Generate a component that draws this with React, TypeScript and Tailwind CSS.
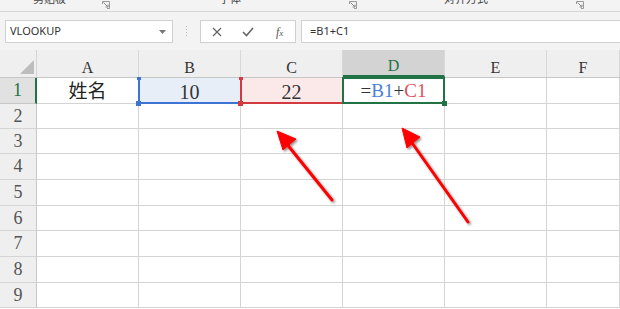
import React from "react";

const COLS = ["A", "B", "C", "D", "E", "F"];
const ROW_HEIGHTS = [26, 25, 25, 26, 26, 25, 26, 26, 25];

const Launcher = () => (
  <svg width="8" height="8" viewBox="0 0 8 8" className="block">
    <path d="M0.5 3V0.5H7.5V7.5H5" stroke="#9a9a9a" fill="none" strokeWidth="1" />
    <path d="M1.5 1.5L6 6M6 3.5V6H3.5" stroke="#8a8a8a" fill="none" strokeWidth="1" />
  </svg>
);

const Cell = ({ col, row }: { col: number; row: number }) => {
  const width = col === 5 ? "w-[73px]" : "w-[102px]";
  if (row === 0 && col === 0) {
    return (
      <div className={`${width} flex items-center justify-center border-r border-b border-[#d4d4d4] text-[19px] text-[#222] font-['Noto_Sans_CJK_SC',sans-serif]`}>
        姓名
      </div>
    );
  }
  if (row === 0 && col === 1) {
    return (
      <div className={`${width} relative flex items-center justify-center pt-[2px] bg-[#e8eef8] border-r border-b border-[#d4d4d4] text-[20px] text-[#333] font-['Liberation_Serif',serif]`}>
        <span className="absolute left-[-1px] top-0 bottom-[-1px] w-[2px] bg-[#3d73d2]" />
        <span className="absolute left-0 right-0 bottom-[-1px] h-[2px] bg-[#3d73d2]" />
        <span className="absolute left-[-2px] top-[-1px] w-[4px] h-[3px] bg-[#3d73d2]" />
        <span className="absolute left-[-3px] bottom-[-3px] w-[5px] h-[5px] bg-[#3d73d2]" />
        10
      </div>
    );
  }
  if (row === 0 && col === 2) {
    return (
      <div className={`${width} relative flex items-center justify-center pt-[2px] bg-[#fbe9ea] border-r border-b border-[#d4d4d4] text-[20px] text-[#333] font-['Liberation_Serif',serif]`}>
        <span className="absolute left-[-1px] top-0 bottom-[-1px] w-[2px] bg-[#d23a3f]" />
        <span className="absolute left-0 right-0 bottom-[-1px] h-[2px] bg-[#d23a3f]" />
        <span className="absolute left-[-2px] top-[-1px] w-[4px] h-[3px] bg-[#d23a3f]" />
        <span className="absolute left-[-3px] bottom-[-3px] w-[5px] h-[5px] bg-[#d23a3f]" />
        22
      </div>
    );
  }
  if (row === 0 && col === 3) {
    return (
      <div className={`${width} relative flex items-center justify-center pt-[2px] border-r border-b border-[#d4d4d4] text-[19px] text-[#333] font-['Liberation_Serif',serif]`}>
        <span className="absolute left-[-1px] right-[-1px] top-[-1px] bottom-[-1px] border-2 border-[#217346]" />
        <span className="absolute right-[-3px] bottom-[-3px] w-[5px] h-[5px] bg-[#217346]" />
        <span>
          =<span className="text-[#4a7fd6]">B1</span>+<span className="text-[#d9545a]">C1</span>
        </span>
      </div>
    );
  }
  return <div className={`${width} border-r border-b border-[#d4d4d4]`} />;
};

export default function App() {
  return (
    <div className="relative w-[620px] h-[309px] overflow-hidden bg-white">
      {/* ribbon group labels, cut off at the top */}
      <div className="h-[11px] bg-[#f3f3f3] overflow-hidden flex items-start text-[11px] text-[#444] font-['Noto_Sans_CJK_SC',sans-serif] leading-none">
        <span className="ml-[33px] -mt-[7px]">剪贴板</span>
        <span className="ml-[36px] mt-[1px]"><Launcher /></span>
        <span className="ml-[109px] -mt-[7px]">字体</span>
        <span className="ml-[108px] mt-[1px]"><Launcher /></span>
        <span className="ml-[87px] -mt-[7px]">对齐方式</span>
        <span className="ml-[88px] mt-[1px]"><Launcher /></span>
      </div>
      <div className="h-px bg-[#d6d6d6]" />

      {/* formula bar */}
      <div className="h-[38px] bg-[#f3f3f3] pt-[8px] flex items-start font-['Noto_Sans',sans-serif] text-[11px] text-[#333]">
        <div className="ml-[5px] w-[168px] h-[23px] bg-white border border-[#d0d0d0] flex items-center pl-[4px] pr-[6px]">
          <span className="flex-1">VLOOKUP</span>
          <svg width="7" height="4" viewBox="0 0 7 4">
            <path d="M0 0H7L3.5 4Z" fill="#777" />
          </svg>
        </div>
        <div className="ml-[13px] mt-[6px] flex flex-col gap-[2px]">
          <span className="w-[1px] h-[1px] bg-[#bbb]" />
          <span className="w-[1px] h-[1px] bg-[#bbb]" />
          <span className="w-[1px] h-[1px] bg-[#bbb]" />
          <span className="w-[1px] h-[1px] bg-[#bbb]" />
        </div>
        <div className="ml-[13px] w-[96px] h-[23px] bg-white border border-[#d0d0d0] flex items-center">
          <svg width="10" height="10" viewBox="0 0 10 10" className="ml-[11px]">
            <path d="M1 1L9 9M9 1L1 9" stroke="#666" strokeWidth="1.3" />
          </svg>
          <svg width="12" height="10" viewBox="0 0 12 10" className="ml-[20px]">
            <path d="M1 5L4.5 8.5L11 1" stroke="#666" strokeWidth="1.6" fill="none" />
          </svg>
          <span className="ml-[22px] text-[12px] italic text-[#555] font-['Liberation_Serif',serif]">
            f<span className="text-[9px]">x</span>
          </span>
        </div>
        <div className="ml-[5px] flex-1 h-[23px] bg-white border border-[#d0d0d0] border-r-0 flex items-center pl-[8px]">
          =B1+C1
        </div>
      </div>

      {/* column headers */}
      <div className="flex h-[28px] bg-[#efefef] border-b border-[#c6c6c6] font-['Liberation_Serif',serif] text-[16px] leading-none text-[#333]">
        <div className="w-[37px] relative border-r border-[#d4d4d4]">
          <svg width="14" height="14" viewBox="0 0 14 14" className="absolute right-[2px] bottom-[3px]">
            <path d="M14 0V14H0Z" fill="#bdbdbd" />
          </svg>
        </div>
        {COLS.map((c, i) => (
          <div
            key={c}
            className={`${i === 5 ? "w-[73px]" : "w-[102px]"} flex items-end justify-center pb-[1px] border-r border-[#d8d8d8] ${
              i === 3 ? "bg-[#d3d3d3] text-[#217346] border-b-2 border-b-[#217346]" : ""
            }`}
          >
            {c}
          </div>
        ))}
      </div>

      {/* rows */}
      {ROW_HEIGHTS.map((h, r) => (
        <div key={r} className="flex" style={{ height: h }}>
          <div
            className={`w-[37px] flex items-center justify-center border-b font-['Liberation_Serif',serif] text-[18px] ${
              r === 0
                ? "bg-[#e1e1e1] text-[#217346] border-r-2 border-r-[#217346] border-b-[#c6c6c6]"
                : "bg-[#efefef] text-[#555] border-r border-r-[#c6c6c6] border-b-[#d4d4d4]"
            }`}
          >
            {r + 1}
          </div>
          {COLS.map((c, i) => (
            <Cell key={c} col={i} row={r} />
          ))}
        </div>
      ))}

      {/* annotation arrows */}
      <svg className="absolute left-0 top-0 pointer-events-none" width="620" height="309" viewBox="0 0 620 309">
        <defs>
          <filter id="sh" x="-20%" y="-20%" width="140%" height="140%">
            <feDropShadow dx="1.5" dy="1.5" stdDeviation="1.2" floodColor="#000" floodOpacity="0.45" />
          </filter>
        </defs>
        <g filter="url(#sh)">
          <path d="M332 200L286 143" stroke="#ff0000" strokeWidth="3" strokeLinecap="round" />
          <path d="M277 131L296 139L283 150Z" fill="#ff0000" stroke="#ff0000" strokeWidth="1" strokeLinejoin="round" />
          <path d="M468 222L410 140" stroke="#ff0000" strokeWidth="3" strokeLinecap="round" />
          <path d="M402 128L420 137L407 148Z" fill="#ff0000" stroke="#ff0000" strokeWidth="1" strokeLinejoin="round" />
        </g>
      </svg>
    </div>
  );
}
